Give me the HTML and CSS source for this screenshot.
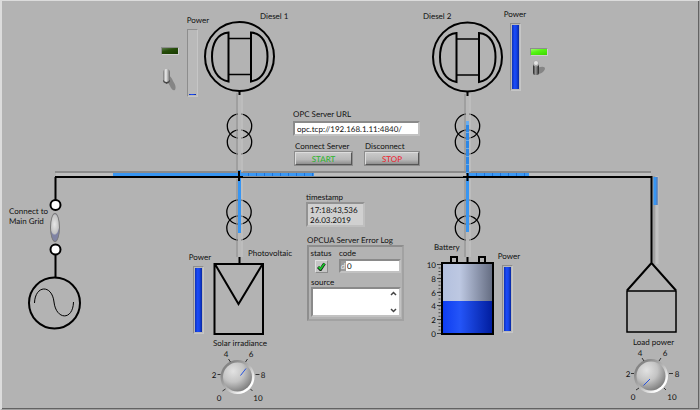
FILE: index.html
```html
<!DOCTYPE html>
<html lang="en">
<head>
<meta charset="utf-8">
<title>Microgrid control panel</title>
<link rel="stylesheet" href="styles.css">
</head>
<body>
<main class="panel">
  <svg class="diagram" width="700" height="410" viewBox="0 0 700 410" aria-hidden="true">
    <defs>
      <linearGradient id="blueFill"><stop offset="0" stop-color="#0d3cf0"/><stop offset=".35" stop-color="#2455f8"/><stop offset="1" stop-color="#001c9c"/></linearGradient>
      <linearGradient id="tank"><stop offset="0" stop-color="#b3c0de"/><stop offset=".35" stop-color="#bdc8e2"/><stop offset="1" stop-color="#636b80"/></linearGradient>
      <linearGradient id="rim" x1="0" y1="0" x2="1" y2="1"><stop offset=".2" stop-color="#858585"/><stop offset=".5" stop-color="#b3b3b3"/><stop offset=".8" stop-color="#fff"/></linearGradient>
      <radialGradient id="knobFace" cx=".35" cy=".3" r=".75"><stop offset="0" stop-color="#e2e2e2"/><stop offset=".5" stop-color="#c4c4c4"/><stop offset="1" stop-color="#7c7c7c"/></radialGradient>
      <g id="generator" fill="none" stroke="#000" stroke-width="2">
        <circle r="34.5"/>
        <path d="M-11 -24V25C-23 23 -27.500 12 -27.500 0S-23 -23 -11 -24ZM11.500 -24V25C23.500 23 28 12 28 0S23.500 -23 11.500 -24Z"/>
        <path d="M-11 -18H11.500M-11 18H11.500" stroke-width="1.600"/>
      </g>
      <g id="transformer" fill="none" stroke="#000" stroke-width="1.300"><circle cy="-8" r="12.200"/><circle cy="8" r="12.200"/></g>
      <g id="knob">
        <circle r="17" fill="url(#rim)"/><circle r="14.500" fill="url(#knobFace)"/>
        <path d="M-20 -2.500H-17M18 -2.500H22M-9 -18L-7 -15M10 -18L8 -15M-15 14L-12 12M15 14L13 12" stroke="#333" fill="none"/>
      </g>
    </defs>

    <!-- bus bar -->
    <path d="M55 172H651" stroke="#8b8b8b" stroke-width="2"/>
    <path d="M56 174.500H651" stroke="#bebebe" stroke-width="3"/>
    <path d="M113 174.500H239" stroke="#3795f2" stroke-width="3"/>
    <path d="M239 174.500H314M467 174.500H529" stroke="#1e72d8" stroke-width="3"/>
    <path d="M241 174.500H314M469 174.500H529" stroke="#3b98f4" stroke-width="3" stroke-dasharray="7 1"/>
    <path d="M55 177H239M467 177H652" stroke="#000" stroke-width="2"/>
    <path d="M239 176.500H467" stroke="#858585"/>
    <path d="M239 177.500H467" stroke="#000"/>

    <!-- main grid -->
    <g fill="none" stroke="#000" stroke-width="2">
      <path d="M55.500 177V200M55.500 255V278"/>
      <circle cx="55.500" cy="205" r="5" fill="#fff"/><circle cx="55.500" cy="249.500" r="5" fill="#fff"/>
      <circle cx="54.500" cy="303" r="25.500"/>
      <path d="M34.500 303C35 285 52 284 54 302S73 321 73.500 302" stroke-width="1"/>
    </g>

    <!-- generators and transformers -->
    <use href="#generator" x="239.500" y="56.500"/><use href="#generator" x="467.500" y="57"/>
    <use href="#transformer" x="239.500" y="134"/><use href="#transformer" x="467.500" y="134"/>
    <use href="#transformer" x="239" y="220"/><use href="#transformer" x="467.500" y="220"/>

    <!-- feeder grooves -->
    <path d="M237 93V172M237 179V257M465 94V172M465 179V257" stroke="#929292" stroke-width="2" opacity=".6"/>
    <path d="M239.500 93V172M239.500 179V257M467.500 94V172M467.500 179V257" stroke="#b9b9b9" stroke-width="3"/>
    <path d="M242 93V172M242 179V257M470 94V172M470 179V257" stroke="#c4c4c4" stroke-width="2" opacity=".6"/>
    <path d="M239.500 170V233M467.500 178V232" stroke="#3795f2" stroke-width="3"/>
    <path d="M467.500 121V174" stroke="#68adf0" stroke-width="3"/>
    <path d="M467.500 125V174" stroke="#2d87e5" stroke-width="3" stroke-dasharray="7 1"/>
    <g stroke="#000" stroke-width="2">
      <path d="M239.500 90V95M467.500 91V96M239.500 257V263M467.500 257V262"/>
      <path d="M239 171V181M467.500 173V181M235 177H243M463 177H472"/>
    </g>

    <!-- photovoltaic -->
    <path d="M214.500 264H263V334H214.500ZM215.500 265L238.500 304L262 265" fill="none" stroke="#000" stroke-width="2"/>

    <!-- battery -->
    <path d="M451 263V257H457V263M479 263V257H485V263" fill="none" stroke="#000" stroke-width="2"/>
    <rect x="442" y="263" width="51" height="71" fill="url(#tank)"/>
    <rect x="442" y="301" width="51" height="33" fill="url(#blueFill)"/>
    <rect x="442" y="263" width="51" height="71" fill="none" stroke="#000" stroke-width="2"/>
    <path d="M437 264.500H441M437 278.500H441M437 292.500H441M437 305.500H441M437 319.500H441M437 333.500H441" stroke="#333"/>
    <path d="M439.500 264V334" stroke="#444" stroke-width="2" stroke-dasharray="1 2.450"/>

    <!-- load -->
    <path d="M654 176V264" stroke="#a1a1a1" stroke-width="3"/>
    <path d="M657 176V264" stroke="#c1c1c1" stroke-width="3"/>
    <path d="M655 177V205" stroke="#3795f2" stroke-width="3"/><path d="M657 177V205" stroke="#1b5fc0"/>
    <path d="M651.500 176V263L627 290.500M651.500 263L676 290.500" fill="none" stroke="#000" stroke-width="2"/>
    <rect x="627" y="291" width="49" height="41" fill="none" stroke="#000" stroke-width="1.500"/>

    <!-- knobs -->
    <use href="#knob" x="237.500" y="377"/><path d="M240.500 375.500L246 368.500" stroke="#2450df"/>
    <use href="#knob" x="651" y="376"/><path d="M643.500 385.500L650 379" stroke="#2450df"/>

    <g class="scale" text-anchor="middle">
      <text x="226" y="357">4</text><text x="251" y="357">6</text><text x="214" y="378">2</text><text x="263" y="378">8</text><text x="219" y="401">0</text><text x="258" y="401">10</text>
      <text x="640" y="356">4</text><text x="665" y="356">6</text><text x="628" y="377">2</text><text x="677" y="377">8</text><text x="633" y="400">0</text><text x="672" y="400">10</text>
    </g>
    <g class="scale" text-anchor="end">
      <text x="436" y="268">10</text><text x="436" y="282">8</text><text x="436" y="296">6</text><text x="436" y="309">4</text><text x="436" y="323">2</text><text x="436" y="337">0</text>
    </g>
  </svg>

  <span class="name diesel1">Diesel 1</span>
  <span class="name diesel2">Diesel 2</span>
  <span class="name pv">Photovoltaic</span>
  <span class="name battery">Battery</span>

  <div class="power power-d1"><span>Power</span><div class="bar"><div class="fill" style="height:1px"></div></div></div>
  <div class="power power-d2"><span>Power</span><div class="bar"><div class="fill" style="height:100%"></div></div></div>
  <div class="power power-pv"><span>Power</span><div class="bar"><div class="fill" style="height:100%"></div></div></div>
  <div class="power power-bat"><span>Power</span><div class="bar"><div class="fill" style="height:100%"></div></div></div>

  <div class="led led-d1"></div>
  <div class="led on led-d2"></div>

  <label class="toggle toggle-d1"><input type="checkbox" aria-label="Diesel 1 switch">
    <svg width="16" height="24" viewBox="0 0 16 24"><defs><linearGradient id="lever"><stop offset="0" stop-color="#777"/><stop offset=".4" stop-color="#eee"/><stop offset="1" stop-color="#666"/></linearGradient></defs><path d="M6 8Q9 9 11 14Q15 20 13 23Q10 24 8 19L5 14Z" fill="#858585"/><rect x="1" y="2" width="7" height="15" rx="3.500" fill="url(#lever)"/><path d="M1 13Q4.500 17 8 13V14Q4.500 20 1 14Z" fill="#444"/></svg></label>
  <label class="toggle toggle-d2"><input type="checkbox" checked aria-label="Diesel 2 switch">
    <svg width="16" height="24" viewBox="0 0 16 24"><defs><linearGradient id="leverDark"><stop offset="0" stop-color="#222"/><stop offset=".45" stop-color="#999"/><stop offset="1" stop-color="#222"/></linearGradient></defs><path d="M6 8Q14 5 14 9Q12 14 6 14Z" fill="#858585"/><rect x="2" y="3" width="6" height="12" rx="2" fill="url(#leverDark)"/><circle cx="5" cy="3.500" r="3" fill="#aaa"/><circle cx="5" cy="3" r="2" fill="#e3e3e3"/></svg></label>

  <label class="grid-label" for="grid">Connect to<br>Main Grid</label>
  <input class="rocker" type="checkbox" id="grid" checked>

  <label class="name solar" for="solar">Solar irradiance</label>
  <input class="dial dial-solar" id="solar" type="range" min="0" max="10" step="0.5" value="6.5">
  <label class="name load" for="load">Load power</label>
  <input class="dial dial-load" id="load" type="range" min="0" max="10" value="0">

  <form class="opc">
    <label for="url">OPC Server URL</label>
    <input class="url" id="url" type="text" value="opc.tcp://192.168.1.11:4840/">
    <div class="actions">
      <div class="action"><span id="conn">Connect Server</span><button type="button" class="start" aria-describedby="conn">START</button></div>
      <div class="action"><span id="disc">Disconnect</span><button type="button" class="stop" aria-describedby="disc">STOP</button></div>
    </div>
  </form>

  <section class="stamp">
    <span>timestamp</span>
    <output class="time">17:18:43,536<br>26.03.2019</output>
  </section>

  <section class="log">
    <span>OPCUA Server Error Log</span>
    <div class="log-box">
      <div class="log-row">
        <div class="status"><span>status</span><div class="check"><svg width="9" height="9" viewBox="0 0 9 9"><path d="M1 5L3.500 7.500L7.500 1.500" fill="none" stroke="#111" stroke-width="3"/><path d="M1.500 5L3.500 7L7.500 1.500" fill="none" stroke="#18c32a" stroke-width="1.800"/></svg></div></div>
        <div class="code"><label for="code">code</label><div class="code-box"><i>d</i><input id="code" type="text" value="0"></div></div>
      </div>
      <label class="source-label" for="source">source</label>
      <div class="source-box"><textarea id="source"></textarea>
        <svg width="10" height="26" viewBox="0 0 10 26"><path d="M2 6L4.500 3.500L7 6M2 20L4.500 22.500L7 20" fill="none" stroke="#444" stroke-width="1.500"/></svg></div>
    </div>
  </section>
</main>
</body>
</html>
```
FILE: styles.css
```css
* { box-sizing: border-box; }

body {
  margin: 0;
  background: #b3b3b3;
  color: #111;
  font: 8px/10px Lato, "Open Sans", sans-serif;
  text-rendering: geometricPrecision;
}

input, button, textarea { font: inherit; color: inherit; margin: 0; text-rendering: inherit; }

.panel {
  position: relative;
  min-height: 100vh;
  overflow: hidden;
  border-style: solid;
  border-width: 1px 1px 1px 2px;
  border-color: #dcdcdc #a0a0a0 #a0a0a0 #dcdcdc;
  box-shadow: inset -1px -1px #636363;
}

.diagram { display: block; margin: -1px -1px -1px -2px; }
.scale { font-size: 8px; fill: #111; }

/* everything below is pinned to its place on the mimic diagram */
.name, .power, .led, .toggle, .grid-label, .rocker, .dial, .opc, .stamp, .log { position: absolute; white-space: nowrap; }

.diesel1 { left: 258px; top: 10px; }
.diesel2 { left: 421px; top: 10px; }
.pv { left: 246px; top: 247px; }
.battery { left: 432px; top: 241px; }
.solar { left: 211px; top: 337px; }
.load { left: 631px; top: 336px; }

.power { display: flex; flex-direction: column; align-items: center; gap: 4px; width: 22px; }
.power-d1 { left: 185px; top: 14px; }
.power-d2 { left: 502px; top: 8px; }
.power-pv { left: 187px; top: 251px; }
.power-bat { left: 496px; top: 250px; }
.power-d1 .bar { margin-right: 11px; }
.power-pv .bar, .power-bat .bar { margin-right: 4px; }

.bar {
  display: flex;
  align-items: flex-end;
  width: 11px;
  height: 68px;
  padding: 1px;
  border: 1px solid;
  border-color: #8d8d8d #c6c6c6 #c6c6c6 #8d8d8d;
  background: #b9b9b9;
}
.fill { width: 100%; background: linear-gradient(90deg, #0c31b8, #1a49f5 35%, #1646ee 60%, #0827a0); }

.led {
  width: 18px;
  height: 8px;
  border: 1px solid;
  border-color: #8d8d8d #cdcdcd #cdcdcd #8d8d8d;
  background: linear-gradient(165deg, #5b784b, #264d0a 40%, #173a00);
}
.led.on { background: linear-gradient(165deg, #9cf86a, #55f512 40%, #3cd500); }
.led-d1 { left: 159px; top: 46px; }
.led-d2 { left: 528px; top: 47px; }

.toggle { width: 16px; height: 24px; }
.toggle input, .dial { opacity: 0; }
.toggle input { position: absolute; inset: 0; }
.toggle svg { display: block; }
.toggle-d1 { left: 160px; top: 66px; }
.toggle-d2 { left: 529px; top: 59px; }

.grid-label { left: 7px; top: 205px; }
.rocker {
  appearance: none;
  left: 48px;
  top: 212px;
  width: 10px;
  height: 29px;
  border: 1px solid #777;
  border-radius: 50%;
  background: radial-gradient(ellipse 5px 11px at 45% 38%, #e6e6e6, #c2c2c2 85%, #8084a4);
}

.dial { width: 30px; height: 30px; }
.dial-solar { left: 221px; top: 361px; }
.dial-load { left: 634px; top: 360px; }

.opc { left: 291px; top: 108px; width: 127px; }
.opc > label { display: block; }
.url {
  display: block;
  width: 100%;
  height: 15px;
  margin-top: 2px;
  padding: 0 2px;
  border: 2px solid;
  border-color: #8a8a8a #c2c2c2 #c2c2c2 #8a8a8a;
  background: #fff;
}
.actions { display: flex; justify-content: space-between; padding: 5px 1px 0 2px; }
.action { display: flex; flex-direction: column; }
.action button {
  height: 13px;
  margin-top: 1px;
  padding: 0;
  border: 1px solid;
  border-color: #ddd #555 #555 #ddd;
  outline: 1px solid #8c8c8c;
  background: linear-gradient(#c9c9c9, #b8b8b8 60%, #8f8f8f);
  line-height: 10px;
}
.start { width: 57px; }
.stop { width: 54px; }
.action .start { color: #1fb51f; }
.action .stop { color: #f01828; }

.stamp { left: 304px; top: 191px; }
.time {
  display: block;
  width: 59px;
  height: 25px;
  padding: 1px 2px;
  border: 2px solid;
  border-color: #929292 #bfbfbf #bfbfbf #929292;
  background: #d0d0d0;
}

.log { left: 305px; top: 234px; width: 97px; }
.log-box {
  padding: 1px 1px 2px 2px;
  border: 2px solid;
  border-color: #8e8e8e #a2a2a2 #a2a2a2 #8e8e8e;
}
.log-row { display: flex; gap: 8px; }
.status { display: flex; flex-direction: column; align-items: center; width: 20px; gap: 2px; }
.check {
  display: flex;
  align-items: center;
  justify-content: center;
  width: 13px;
  height: 13px;
  border: 1px solid;
  border-color: #e0e0e0 #8c8c8c #8c8c8c #e0e0e0;
  background: #c6c6c6;
}
.code { flex: 1; min-width: 0; }
.code label { display: block; }
.code-box {
  display: flex;
  height: 14px;
  margin-top: 1px;
  border: 2px solid;
  border-color: #8a8a8a #c2c2c2 #c2c2c2 #8a8a8a;
  background: #fff;
}
.code-box i { width: 5px; background: #9a9a9a; color: #eee; }
.code-box input { flex: 1; min-width: 0; padding: 0 1px; border: 0; background: none; }
.source-label { display: block; margin-top: 4px; }
.source-box {
  display: flex;
  height: 30px;
  border: 2px solid;
  border-color: #8a8a8a #c2c2c2 #c2c2c2 #8a8a8a;
  background: #fff;
}
.source-box textarea { flex: 1; min-width: 0; height: 100%; padding: 1px; border: 0; resize: none; background: none; }
```
